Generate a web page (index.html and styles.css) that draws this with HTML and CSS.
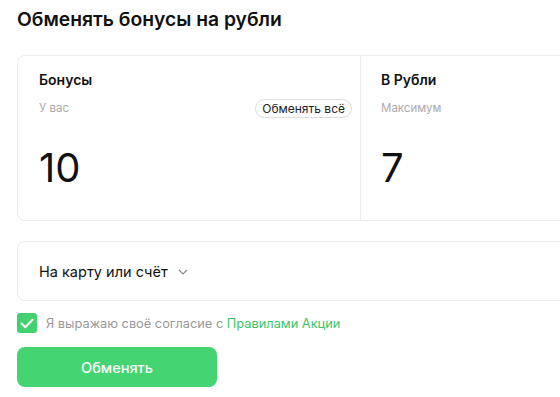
FILE: index.html
```html
<!DOCTYPE html>
<html lang="ru">
<head>
  <meta charset="UTF-8" />
  <title>Обменять бонусы на рубли</title>
  <link rel="stylesheet" href="styles.css">
</head>
<body>
  <div class="page">
    <h1 class="title">Обменять бонусы на рубли</h1>

    <!-- Exchange card -->
    <div class="exchange">
      <div class="col">
        <div class="col-title">Бонусы</div>
        <div class="col-sub">
          <span>У вас</span>
          <button class="pill">Обменять всё</button>
        </div>
        <div class="amount">10</div>
      </div>
      <div class="col col-right">
        <div class="col-title">В Рубли</div>
        <div class="col-sub">
          <span>Максимум</span>
        </div>
        <div class="amount">7</div>
      </div>
    </div>

    <!-- Destination -->
    <div class="target">
      На карту или счёт
      <svg class="chevron" width="10" height="6" viewBox="0 0 10 6"><path d="M1 1l4 4 4-4" fill="none" stroke="#888" stroke-width="1.2"/></svg>
    </div>

    <label class="agree">
      <span class="check">
        <svg width="14" height="11" viewBox="0 0 14 11"><path d="M1.5 5.5l3.8 3.7L12.5 1.8" fill="none" stroke="#fff" stroke-width="2" stroke-linecap="round" stroke-linejoin="round"/></svg>
      </span>
      <span>Я выражаю своё согласие с <a href="#">Правилами Акции</a></span>
    </label>

    <button class="submit">Обменять</button>
  </div>
</body>
</html>
```

FILE: styles.css
```css
body {
  margin: 0;
  font-family: Inter, "Noto Sans", sans-serif;
  color: #111;
  background: #fff;
  overflow: hidden;
}

.page {
  padding: 0 0 0 17px;
  width: 543px;
  overflow: hidden;
}

.title {
  margin: 0;
  padding-top: 7px;
  font-size: 19.3px;
  font-weight: 600;
  line-height: 24px;
  height: 48px;
}

.exchange {
  display: flex;
  width: 690px;
  border: 1px solid #ececec;
  border-radius: 8px;
  height: 164px;
}

.col {
  width: 342px;
  padding: 14px 8px 0 21px;
  box-sizing: border-box;
}

.col-right {
  border-left: 1px solid #ececec;
  padding-left: 20px;
}

.col-title {
  font-size: 14px;
  font-weight: 600;
  line-height: 20px;
}

.col-sub {
  display: flex;
  justify-content: space-between;
  align-items: center;
  margin-top: 8px;
  font-size: 11.5px;
  color: #aaa;
  height: 20px;
}

.pill {
  font-family: inherit;
  font-size: 12px;
  color: #222;
  background: #fff;
  border: 1px solid #ddd;
  border-radius: 10px;
  padding: 1px 6px;
  height: 19px;
}

.amount {
  margin-top: 28px;
  font-size: 40px;
  line-height: 44px;
  font-weight: 400;
}

.target {
  display: flex;
  align-items: center;
  gap: 10px;
  margin-top: 20px;
  width: 690px;
  height: 58px;
  border: 1px solid #ececec;
  border-radius: 8px;
  padding-left: 21px;
  box-sizing: border-box;
  height: 60px;
  font-size: 14.5px;
}

.chevron {
  margin-top: 1px;
}

.agree {
  display: flex;
  align-items: center;
  gap: 9px;
  margin-top: 12px;
  font-size: 12.8px;
  color: #999;
}

.check {
  width: 20px;
  height: 20px;
  border-radius: 3px;
  background: #45d070;
  display: flex;
  align-items: center;
  justify-content: center;
}

.agree a {
  color: #3cc468;
  text-decoration: none;
}

.submit {
  display: block;
  margin-top: 14px;
  width: 200px;
  height: 40px;
  border: none;
  border-radius: 8px;
  background: #45d472;
  color: #fff;
  font-family: inherit;
  font-size: 14.5px;
  font-weight: 500;
}
```
